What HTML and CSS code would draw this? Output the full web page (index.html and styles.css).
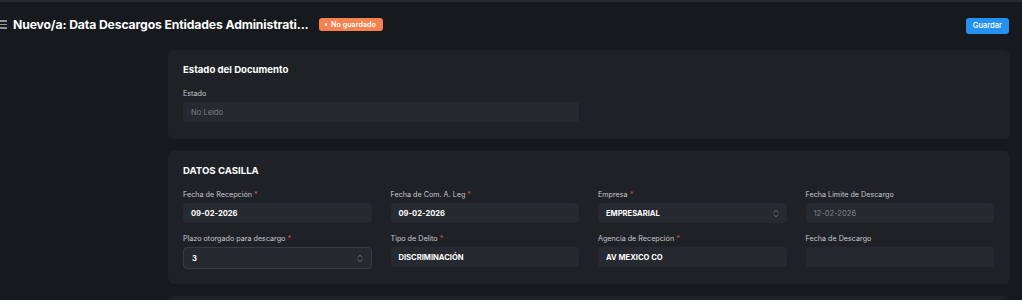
FILE: index.html
```html
<!DOCTYPE html>
<html lang="es">
<head>
<meta charset="utf-8">
<link rel="stylesheet" href="styles.css">
</head>
<body>
<header class="topbar">
  <div class="title-group">
    <span class="hamburger"><span></span><span></span><span></span></span>
    <h1 class="title">Nuevo/a: Data Descargos Entidades Administrati...</h1>
    <span class="badge"><span class="dot"></span>No guardado</span>
  </div>
  <button class="btn-primary">Guardar</button>
</header>
<main class="page">
  <section class="card card-first">
    <h2 class="card-title">Estado del Documento</h2>
    <div class="grid">
      <div class="field span2">
        <label class="label">Estado</label>
        <div class="input muted">No Leido</div>
      </div>
    </div>
  </section>
  <section class="card">
    <h2 class="card-title">DATOS CASILLA</h2>
    <div class="grid">
      <div class="field">
        <label class="label">Fecha de Recepción <span class="req">*</span></label>
        <div class="input strong">09-02-2026</div>
      </div>
      <div class="field">
        <label class="label">Fecha de Com. A. Leg <span class="req">*</span></label>
        <div class="input strong">09-02-2026</div>
      </div>
      <div class="field">
        <label class="label">Empresa <span class="req">*</span></label>
        <div class="input strong select">EMPRESARIAL<svg class="chev" width="6" height="9" viewBox="0 0 6 9"><path d="M1.2 3 3 1.2 4.8 3M1.2 6 3 7.8 4.8 6" fill="none" stroke="currentColor" stroke-width="0.9" stroke-linecap="round" stroke-linejoin="round"/></svg></div>
      </div>
      <div class="field">
        <label class="label">Fecha Limite de Descargo</label>
        <div class="input muted">12-02-2026</div>
      </div>
      <div class="field">
        <label class="label">Plazo otorgado para descargo <span class="req">*</span></label>
        <div class="input strong select focused">3<svg class="chev" width="6" height="9" viewBox="0 0 6 9"><path d="M1.2 3 3 1.2 4.8 3M1.2 6 3 7.8 4.8 6" fill="none" stroke="currentColor" stroke-width="0.9" stroke-linecap="round" stroke-linejoin="round"/></svg></div>
      </div>
      <div class="field">
        <label class="label">Tipo de Delito <span class="req">*</span></label>
        <div class="input strong">DISCRIMINACIÓN</div>
      </div>
      <div class="field">
        <label class="label">Agencia de Recepción <span class="req">*</span></label>
        <div class="input strong">AV MEXICO CO</div>
      </div>
      <div class="field">
        <label class="label">Fecha de Descargo</label>
        <div class="input"></div>
      </div>
    </div>
  </section>
  <section class="card card-next"></section>
</main>
</body>
</html>
```
FILE: styles.css
```css
* { box-sizing: border-box; }
html, body { margin: 0; padding: 0; }
body {
  background: #16191d;
  color: #f3f3f3;
  font-family: Inter, "Noto Sans", sans-serif;
  border-top: 2px solid #26292d;
  overflow: hidden;
  height: 300px;
}
.topbar {
  height: 48px;
  display: flex;
  align-items: center;
  justify-content: space-between;
  padding: 0 13px 3px 0;
}
.title-group { display: flex; align-items: center; }
.hamburger {
  display: flex; flex-direction: column; gap: 2px;
  width: 7px; margin-right: 6px;
}
.hamburger span { display: block; height: 1.5px; background: #8e939a; }
.title {
  margin: 0;
  font-size: 12.2px;
  font-weight: 700;
  color: #fff;
  letter-spacing: -0.01em;
}
.badge {
  margin-left: 10px;
  display: inline-flex; align-items: center; gap: 4px;
  background: #f7814f;
  color: #fff;
  font-size: 7.2px;
  font-weight: 600;
  height: 13px;
  padding: 0 7px 0 6px;
  border-radius: 3px;
}
.dot { width: 2.5px; height: 2.5px; border-radius: 50%; background: #fff; }
.btn-primary {
  background: #2490ef;
  color: #fff;
  border: 0;
  border-radius: 3px;
  font-family: inherit;
  font-size: 7.6px;
  font-weight: 500;
  height: 16px;
  padding: 0 7px;
  margin-top: 2px;
}
.page {
  padding: 0 12px 0 168px;
  display: flex;
  flex-direction: column;
  gap: 12px;
}
.card {
  background: #1e2125;
  border-radius: 6px;
  padding: 14px 16px 15px 15px;
}
.card-first { padding-bottom: 17px; }
.card-next { height: 40px; }
.card-title {
  margin: 0 0 12px;
  font-size: 9.6px;
  font-weight: 700;
  color: #fff;
  line-height: 12px;
}
.grid {
  display: grid;
  grid-template-columns: repeat(4, 1fr);
  column-gap: 19px;
  row-gap: 10px;
  align-items: start;
}
.span2 { grid-column: span 2; }
.field { display: flex; flex-direction: column; gap: 3px; }
.label { font-size: 7.2px; color: #c6c9cd; line-height: 11px; }
.req { color: #e5484d; }
.input {
  height: 20px;
  background: #262a30;
  border-radius: 4px;
  display: flex; align-items: center;
  padding: 0 8px;
  font-size: 7.6px;
  color: #fff;
}
.input.strong { font-weight: 700; }
.input.muted { color: #7b8088; }
.input.focused { border: 1px solid #363b42; height: 22px; padding-left: 8px; }
.select { justify-content: space-between; }
.chev { color: #7b8088; }
```
